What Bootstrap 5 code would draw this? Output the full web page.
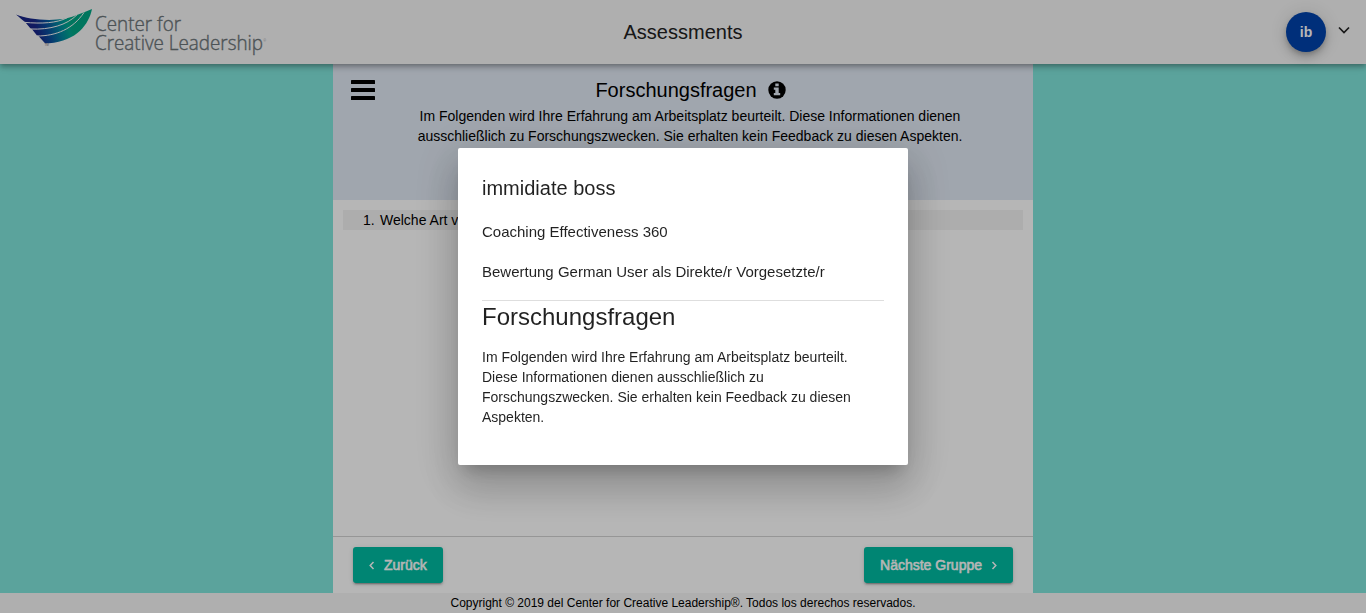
<!DOCTYPE html>
<html lang="de">
<head>
<meta charset="utf-8">
<meta name="viewport" content="width=device-width, initial-scale=1">
<title>Assessments</title>
<link href="https://cdn.jsdelivr.net/npm/bootstrap@5.3.0/dist/css/bootstrap.min.css" rel="stylesheet">
<style>
body{font-family:"Liberation Sans",Arial,sans-serif;font-size:14px;line-height:20px;color:#000;background:#80e5db;overflow:hidden}
.topbar{height:64px;background:#f5f5f5;box-shadow:0 2px 4px -1px rgba(0,0,0,.2),0 4px 5px rgba(0,0,0,.14),0 1px 10px rgba(0,0,0,.12);z-index:2}
.app-title{font-size:20px;color:#222;padding-left:16px}
.avatar{width:40px;height:40px;background:#0043ab;color:#fff;font-size:14px;box-shadow:0 3px 5px -1px rgba(0,0,0,.2),0 6px 10px rgba(0,0,0,.14),0 1px 18px rgba(0,0,0,.12)}
.sheet{width:700px}
.sheet-head{height:136px;background:#e1e9f4;padding:11px 18px 0}
.burger{margin-top:5px}
.intro{width:580px;margin-left:25px}
.intro h1{font-size:20px;line-height:30px;padding:0 0 1px 4px}
.question{background:#f3f3f3;margin:10px 10px 0;padding-left:20px}
.question-no{width:17px}
.sheet-foot{height:57px;border-top:1px solid #d3d3d3;padding:10px 20px}
.btn-teal,.btn-teal:hover{background:#00bba2;color:#fff;height:36px;border:0;border-radius:3px;padding:0 16px;font-size:14px;line-height:36px;font-weight:500;box-shadow:0 3px 1px -2px rgba(0,0,0,.2),0 2px 2px rgba(0,0,0,.14),0 1px 5px rgba(0,0,0,.12)}
.semi{-webkit-text-stroke:.55px currentColor}
.page-foot{height:20px;background:#f5f5f5;font-size:12px}
.modal-backdrop{--bs-backdrop-opacity:.288}
.modal-dialog{width:450px;max-width:450px;margin-top:148px}
.modal-content{height:317px;border:0;border-radius:2px;padding:24px;color:rgba(0,0,0,.87);box-shadow:0 11px 15px -7px rgba(0,0,0,.2),0 24px 38px 3px rgba(0,0,0,.14),0 9px 46px 8px rgba(0,0,0,.12)}
.modal-content h2{font-size:20px;line-height:32px;margin-bottom:16px}
.modal-content .fact{font-size:15px;line-height:24px;margin-bottom:16px}
.modal-content h3{font-size:24px;line-height:32px;margin-bottom:14px}
.rule{border-top:1px solid #dedede}
</style>
</head>
<body class="vh-100 d-flex flex-column">
<header class="topbar position-relative flex-shrink-0 row g-0 align-items-center">
  <div class="col">
    <svg class="d-block" width="280" height="64" viewBox="0 0 280 64" role="img" aria-label="Center for Creative Leadership">
      <defs>
        <linearGradient id="wing" gradientUnits="userSpaceOnUse" x1="36" y1="30" x2="70" y2="20">
          <stop offset="0" stop-color="#182587"/><stop offset=".3" stop-color="#0b4b9c"/><stop offset=".65" stop-color="#02869f"/><stop offset=".9" stop-color="#00a690"/><stop offset="1" stop-color="#00a684"/>
        </linearGradient>
      </defs>
      <path fill="url(#wing)" d="M16 14.500C28 19 46 21.500 65 18.800C75 16.500 83 12.500 92 9C89 24 77 41 49 43.300H45L38.500 36L37 35.500L32 29.200L30.500 28.500L25.500 22.500C22 20 20 17.500 16 14.500Z"/>
      <g fill="none" stroke="#f5f5f5" stroke-width="1"><path d="M24 22.300C42 24 57 23 67 17.800"/><path d="M30 29C50 30 67 25 77 14.800"/><path d="M37 36C56 36 73 29 84 12.500"/></g>
      <text x="44.500" y="46" font-size="3" fill="#777">TM</text>
      <g font-family="Open Sans, sans-serif" font-weight="300" fill="#6b7478" stroke="#6b7478" stroke-width=".4" font-size="20.500">
        <text x="95" y="31" textLength="86" lengthAdjust="spacingAndGlyphs">Center for</text>
        <text x="95" y="50.300" textLength="168" lengthAdjust="spacingAndGlyphs">Creative Leadership</text>
        <text x="263.200" y="42" font-size="3.500" stroke="none">®</text>
      </g>
    </svg>
  </div>
  <div class="col-auto app-title">Assessments</div>
  <div class="col d-flex align-items-center justify-content-end gap-2 pe-3">
    <div class="avatar rounded-circle d-flex align-items-center justify-content-center fw-bold">ib</div>
    <svg class="ms-1 mb-1" width="12" height="8" viewBox="0 0 12 8"><path d="M1 1.500L6 6.500L11 1.500" fill="none" stroke="#222" stroke-width="1.700"/></svg>
  </div>
</header>
<main class="sheet mx-auto bg-white flex-grow-1 d-flex flex-column">
  <section class="sheet-head d-flex align-items-start">
    <svg class="burger flex-shrink-0" width="24" height="20" viewBox="0 0 24 20"><rect width="24" height="4" rx=".6"/><rect y="8" width="24" height="4" rx=".6"/><rect y="16" width="24" height="4" rx=".6"/></svg>
    <div class="intro text-center">
      <h1 class="d-flex align-items-center justify-content-center fw-normal mb-0">Forschungsfragen
        <svg class="ms-2" width="24" height="18" viewBox="-3 0 24 18"><circle cx="9" cy="9" r="8.700"/><path fill="#e1e9f4" d="M7.300 2.500h3.400V5.200H7.300zM5.800 6.500h4.900v5.500h1.500v2.300H5.800V12h1.500V8.800H5.800z"/></svg>
      </h1>
      <p class="mb-0">Im Folgenden wird Ihre Erfahrung am Arbeitsplatz beurteilt. Diese Informationen dienen<br>ausschließlich zu Forschungszwecken. Sie erhalten kein Feedback zu diesen Aspekten.</p>
    </div>
  </section>
  <section class="flex-grow-1"><div class="question d-flex"><span class="question-no">1.</span><span>Welche Art v</span></div></section>
  <div class="sheet-foot d-flex justify-content-between align-items-start">
    <button type="button" class="btn btn-teal d-flex align-items-center gap-2"><svg width="7" height="10" viewBox="0 0 7 10"><path d="M4.500 2L1.200 5.500L4.500 9" fill="none" stroke="#fff" stroke-width="1.500"/></svg><span class="semi">Zurück</span></button>
    <button type="button" class="btn btn-teal d-flex align-items-center gap-2"><span class="semi">Nächste Gruppe</span><svg width="7" height="10" viewBox="0 0 7 10"><path d="M2.500 2L5.800 5.500L2.500 9" fill="none" stroke="#fff" stroke-width="1.500"/></svg></button>
  </div>
</main>
<footer class="page-foot text-center flex-shrink-0">Copyright © 2019 del Center for Creative Leadership®. Todos los derechos reservados.</footer>

<div class="modal-backdrop show"></div>
<div class="modal d-block overflow-hidden" tabindex="-1" role="dialog" aria-modal="true">
  <div class="modal-dialog mx-auto mb-0">
    <div class="modal-content">
      <h2 class="fw-normal">immidiate boss</h2>
      <p class="fact">Coaching Effectiveness 360</p>
      <p class="fact">Bewertung German User als Direkte/r Vorgesetzte/r</p>
      <div class="rule"></div>
      <h3 class="fw-normal">Forschungsfragen</h3>
      <p class="mb-0">Im Folgenden wird Ihre Erfahrung am Arbeitsplatz beurteilt. Diese Informationen dienen ausschließlich zu Forschungszwecken. Sie erhalten kein Feedback zu diesen Aspekten.</p>
    </div>
  </div>
</div>
<script src="https://cdn.jsdelivr.net/npm/bootstrap@5.3.0/dist/js/bootstrap.bundle.min.js"></script>
</body>
</html>
